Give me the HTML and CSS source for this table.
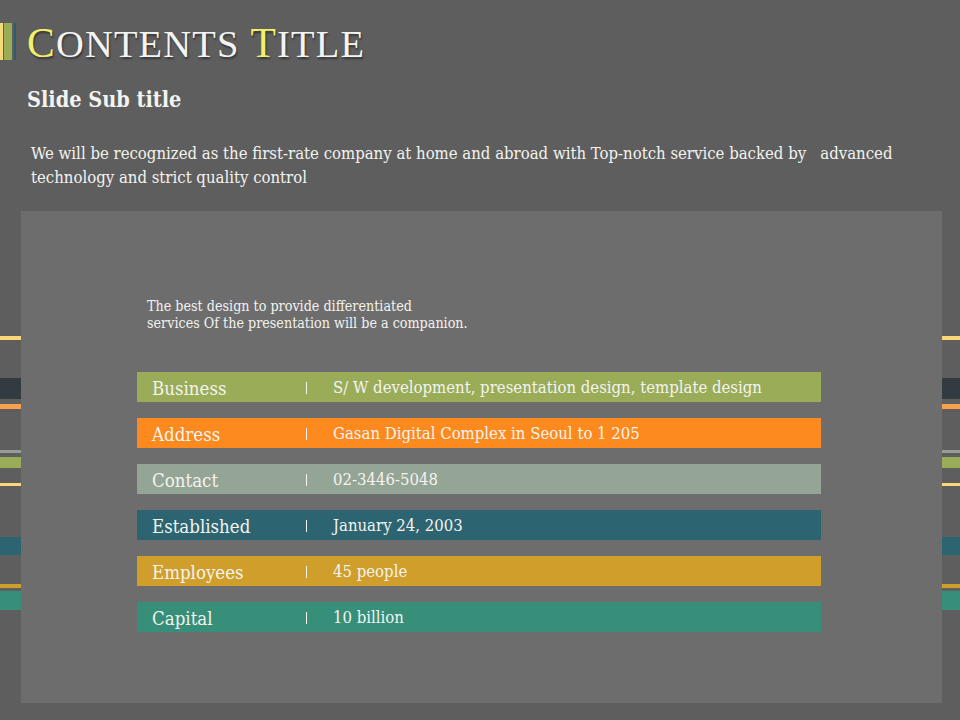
FILE: index.html
```html
<!DOCTYPE html>
<html lang="en">
<head>
<meta charset="utf-8">
<title>Contents Title</title>
<link rel="stylesheet" href="styles.css">
</head>
<body>
<div class="slide">
  <header class="title-row">
    <div class="bars"><span class="bar b1"></span><span class="bar b2"></span><span class="bar b3"></span></div>
    <h1 class="title"><span class="cap">C</span>ONTENTS <span class="cap">T</span>ITLE</h1>
  </header>
  <h2 class="subtitle">Slide Sub title</h2>
  <p class="lead">We will be recognized as the first-rate company at home and abroad with Top-notch service backed by &nbsp; advanced technology and strict quality control</p>
  <section class="stage">
    <div class="deco">
      <span class="s s1"></span><span class="s s2"></span><span class="s s3"></span><span class="s s4"></span><span class="s s5"></span><span class="s s6"></span><span class="s s7"></span><span class="s s8"></span><span class="s s9"></span>
    </div>
    <div class="panel">
      <p class="intro">The best design to provide differentiated<br>services Of the presentation will be a companion.</p>
      <ul class="rows">
        <li class="row r-green"><span class="label">Business</span><span class="sep"></span><span class="value">S/ W development, presentation design, template design</span></li>
        <li class="row r-orange"><span class="label">Address</span><span class="sep"></span><span class="value">Gasan Digital Complex in Seoul to 1 205</span></li>
        <li class="row r-gray"><span class="label">Contact</span><span class="sep"></span><span class="value">02-3446-5048</span></li>
        <li class="row r-teal"><span class="label">Established</span><span class="sep"></span><span class="value">January 24, 2003</span></li>
        <li class="row r-gold"><span class="label">Employees</span><span class="sep"></span><span class="value">45 people</span></li>
        <li class="row r-sea"><span class="label">Capital</span><span class="sep"></span><span class="value">10 billion</span></li>
      </ul>
    </div>
  </section>
</div>
</body>
</html>
```
FILE: styles.css
```css
html, body {
  margin: 0;
  padding: 0;
  background: #5e5e5e;
}
body {
  font-family: "DejaVu Serif Condensed", "DejaVu Serif", "Liberation Serif", serif;
  color: #f3f3f0;
}
.slide {
  width: 960px;
  height: 720px;
  overflow: hidden;
  display: flex;
  flex-direction: column;
}
.title-row {
  display: flex;
  align-items: center;
  margin-top: 23px;
  height: 37px;
}
.bars {
  display: flex;
  height: 37px;
}
.bar { display: block; height: 100%; }
.b1 { width: 3px; background: #f6d77c; margin-right: 1px; }
.b2 { width: 8px; background: #9aac58; margin-right: 2px; }
.b3 { width: 2px; background: #2f5e6b; }
.title {
  margin: 0 0 0 11px;
  font-family: "Liberation Serif", serif;
  font-weight: normal;
  font-size: 38.5px;
  line-height: 37px;
  letter-spacing: 1.2px;
  color: #f4f4f4;
  text-shadow: 1px 2px 2px rgba(0,0,0,0.45);
  padding-top: 4px;
}
.title .cap {
  color: #f2ef6a;
  font-size: 41.5px;
}
.subtitle {
  margin: 26px 0 0 27px;
  font-size: 21.5px;
  line-height: 28px;
  font-weight: bold;
  color: #f3f3f0;
}
.lead {
  margin: 28px 0 0 31px;
  width: 900px;
  font-size: 16.6px;
  line-height: 24px;
}
.stage {
  position: relative;
  margin-top: 21px;
  height: 492px;
}
.deco {
  position: absolute;
  inset: 0;
}
.s {
  position: absolute;
  left: 0;
  right: 0;
  display: block;
}
.s1 { top: 125px; height: 4px; background: #fcd77a; }
.s2 { top: 167px; height: 21px; background: #323b3f; }
.s3 { top: 193px; height: 5px; background: #f7a04d; }
.s4 { top: 239px; height: 3px; background: #959e96; }
.s5 { top: 246px; height: 11px; background: #9aac58; }
.s6 { top: 272px; height: 3px; background: #fcd77a; }
.s7 { top: 326px; height: 18px; background: #2d6471; }
.s8 { top: 373px; height: 4px; background: #d09e2a; }
.s9 { top: 380px; height: 19px; background: #378e79; }
.panel {
  position: relative;
  margin-left: 21px;
  width: 921px;
  height: 492px;
  background: #6d6d6d;
  padding: 87px 0 0 116px;
  box-sizing: border-box;
}
.intro {
  margin: 0 0 0 10px;
  font-size: 14.2px;
  line-height: 17px;
}
.rows {
  list-style: none;
  margin: 40px 0 0 0;
  padding: 0;
  width: 684px;
  display: flex;
  flex-direction: column;
  gap: 16px;
}
.row {
  height: 30px;
  display: flex;
  align-items: center;
}
.label {
  width: 154px;
  padding-left: 15px;
  font-size: 18.5px;
  padding-top: 3px;
}
.sep {
  width: 1px;
  height: 12px;
  background: #f3f3f0;
  margin-top: 2px;
}
.value {
  margin-left: 26px;
  font-size: 16.6px;
}
.r-green { background: #9aac58; }
.r-orange { background: #fd8a1f; }
.r-gray { background: #94a595; }
.r-teal { background: #2d6471; }
.r-gold { background: #d09e2a; }
.r-sea { background: #378e79; }
```
